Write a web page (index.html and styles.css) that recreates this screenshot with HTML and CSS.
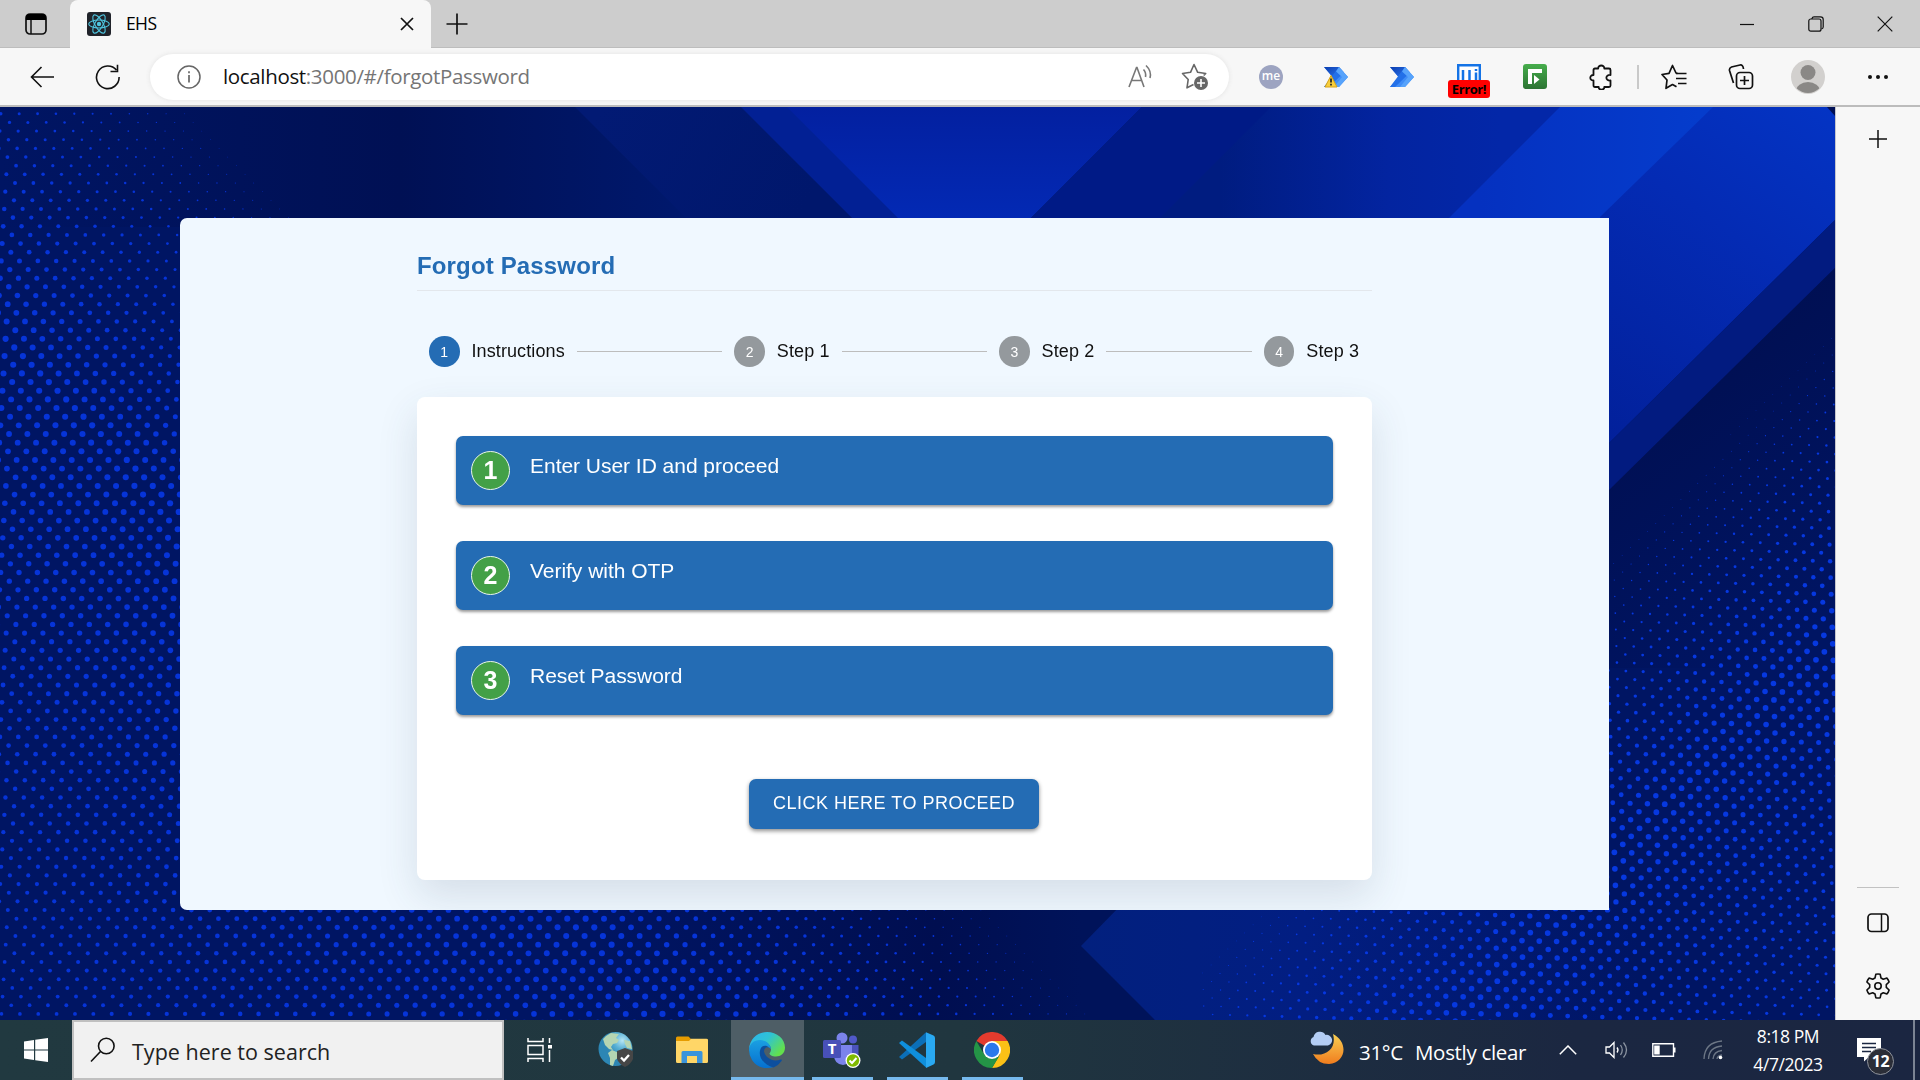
FILE: index.html
```html
<!DOCTYPE html>
<html lang="en">
<head>
<meta charset="utf-8">
<title>EHS</title>
<link rel="stylesheet" href="styles.css">
</head>
<body>
<div class="screen">
  <header class="tabstrip">
    <svg class="tab-actions" width="24" height="24" viewBox="0 0 24 24"><rect x="2" y="2" width="20" height="20" rx="4" fill="none" stroke="#111" stroke-width="1.7"/><path d="M2 8V5.500a3.500 3.500 0 0 1 3.500-3.500h13a3.500 3.500 0 0 1 3.500 3.500V8z" fill="#000"/><path d="M7 8v14" stroke="#111" stroke-width="1.500"/></svg>
    <div class="tab">
      <svg width="24" height="24" viewBox="0 0 24 24"><rect width="24" height="24" rx="3" fill="#20232a"/><g fill="none" stroke="#4fc6e0" stroke-width="1.100"><ellipse cx="12" cy="12" rx="10.300" ry="4"/><ellipse cx="12" cy="12" rx="10.300" ry="4" transform="rotate(60 12 12)"/><ellipse cx="12" cy="12" rx="10.300" ry="4" transform="rotate(120 12 12)"/></g><circle cx="12" cy="12" r="2.200" fill="#4fc6e0"/></svg>
      <span class="tab-title">EHS</span>
      <svg class="tab-close" width="14" height="14" viewBox="0 0 14 14"><path d="M1 1l12 12M13 1L1 13" stroke="#111" stroke-width="1.700"/></svg>
    </div>
    <svg class="new-tab" width="22" height="22" viewBox="0 0 22 22"><path d="M11 .5v21M.5 11h21" stroke="#111" stroke-width="1.700"/></svg>
    <div class="window-buttons">
      <svg width="16" height="16" viewBox="0 0 16 16"><path d="M1 8.500h14" stroke="#111" stroke-width="1.200"/></svg>
      <svg width="16" height="16" viewBox="0 0 16 16"><path d="M4 3V2.500Q4.500.8 6 .8h6.500Q15.200.8 15.200 3.500V11q0 1.500-1.700 2" fill="none" stroke="#111" stroke-width="1.200"/><rect x=".8" y="3" width="12.200" height="12.200" rx="2" fill="none" stroke="#111" stroke-width="1.200"/></svg>
      <svg width="16" height="16" viewBox="0 0 16 16"><path d="M.7.7l14.600 14.600M15.300.7L.7 15.300" stroke="#111" stroke-width="1.200"/></svg>
    </div>
  </header>

  <nav class="toolbar">
    <svg class="back" width="24" height="22" viewBox="0 0 24 22"><path d="M24 11H1.500M11.500 1L1.500 11l10 10" fill="none" stroke="#111" stroke-width="1.600"/></svg>
    <svg class="reload" width="26" height="26" viewBox="0 0 26 26"><path d="M24 11.500A11.300 11.300 0 1 1 20.500 5" fill="none" stroke="#111" stroke-width="1.600" transform="rotate(8 13 13)"/><path d="M22.500.8V7.500H15.500" fill="none" stroke="#111" stroke-width="1.600"/></svg>
    <div class="address">
      <svg width="24" height="24" viewBox="0 0 24 24"><circle cx="12" cy="12" r="11" fill="none" stroke="#666" stroke-width="1.500"/><path d="M12 10v7.500M12 6.200v2" stroke="#666" stroke-width="1.700"/></svg>
      <span class="url"><b>localhost</b>:3000/#/forgotPassword</span>
      <svg class="read" width="26" height="26" viewBox="0 0 26 26"><path d="M2 23L9.500 3.500h.5L17 23M4.700 16.500h9.800M16.500 5.500q2.800 3 2 7.500M19 1.500q5.800 5.500 4 12.500" fill="none" stroke="#777" stroke-width="1.600"/></svg>
      <svg width="28" height="28" viewBox="0 0 28 28"><path d="M12.500 23L6 26.300l1.200-8.300L1.500 12l8-1.200L13 3l3.700 7.800 8 1.200-2 2" transform="translate(0 -1.500)" fill="none" stroke="#666" stroke-width="1.600" stroke-linejoin="round"/><circle cx="20" cy="20" r="7" fill="#666"/><path d="M20 16v8M16 20h8" stroke="#fff" stroke-width="1.600"/></svg>
    </div>
    <svg width="24" height="24" viewBox="0 0 24 24"><circle cx="12" cy="12" r="12" fill="#9da4c1"/><text x="12" y="15" text-anchor="middle" class="me">me</text></svg>
    <svg width="24" height="24" viewBox="0 0 24 24"><use href="#flow"/><path d="M7 10.500L13 22H1z" fill="#f8cf3c" stroke="#d9a417" stroke-linejoin="round"/><path d="M7 13.500v4M7 18.700v1.800" stroke="#222" stroke-width="1.700"/></svg>
    <svg width="24" height="24" viewBox="0 0 24 24"><defs><linearGradient id="fd" x1="0" y1="0" x2="1" y2="1"><stop offset="0" stop-color="#0a3cae"/><stop offset="1" stop-color="#2a72ea"/></linearGradient><g id="flow"><path d="M0 2h15l9 10-9 10H0l8.500-10z" fill="#3f8df7"/><path d="M0 2h15l-6.500 10H8.500z" fill="url(#fd)"/><path d="M15 2L0 22h5L20 7.500z" fill="#2370e8"/><path d="M15 2l9 10-9 10H10l8-10-6-5.500z" fill="#57a3fb"/></g></defs><use href="#flow"/></svg>
    <div class="error-ext">
      <svg width="24" height="16" viewBox="0 0 24 16"><path d="M1.200 16V1.200h21.600V16" fill="#fff" stroke="#1473e6" stroke-width="2.400"/><path d="M6 6v10M12.500 6v10M19 8.500V16M19 5v2" stroke="#1473e6" stroke-width="2.500"/></svg>
      <span class="error-badge">Error!</span>
    </div>
    <svg class="green" width="24" height="25" viewBox="0 0 24 25"><defs><linearGradient id="gr" x2="0" y2="1"><stop offset="0" stop-color="#46ad4c"/><stop offset="1" stop-color="#2c7433"/></linearGradient></defs><rect width="24" height="25" rx="3" fill="url(#gr)"/><path d="M5 5h14v4H9v11H5z" fill="#fff"/><path d="M11 11l5.500 4.500L11 20z" fill="#fff"/></svg>
    <svg width="24" height="26" viewBox="0 0 24 26"><path d="M6 4.500h3.200C9 .5 15.500.5 15.300 4.500H20q1.500 0 1.500 1.500v5c-5.500-.5-5.500 6 0 5.500v5q0 1.500-1.500 1.500h-4.700c.2 3.500-5.800 3.500-5.600 0H6q-1.500 0-1.500-1.500v-5C.2 16.700.2 10.800 4.500 11V6q0-1.500 1.500-1.500z" fill="none" stroke="#111" stroke-width="1.800" stroke-linejoin="round"/></svg>
    <i class="separator"></i>
    <svg width="26" height="26" viewBox="0 0 26 26"><path d="M15 9.500h10.500M15 14.500h10.500M17 19.500h8.500" stroke="#111" stroke-width="1.700"/><path d="M16.500 9.500L15 9l-3.500-7.500L8 9.300 1 10.500l5 5.500-1 8.300 6.500-3.800 4 2.300" fill="none" stroke="#111" stroke-width="1.700" stroke-linejoin="round"/></svg>
    <svg width="26" height="26" viewBox="0 0 26 26"><rect x="8.500" y="8.500" width="16" height="16" rx="3.500" fill="none" stroke="#111" stroke-width="1.700"/><path d="M16.500 12v9M12 16.500h9M5.500 19L1.500 6.500Q1 4 3.500 3L12 1q3-.5 3.500 4" fill="none" stroke="#111" stroke-width="1.700"/></svg>
    <svg width="34" height="34" viewBox="0 0 34 34"><defs><clipPath id="av"><circle cx="17" cy="17" r="16"/></clipPath></defs><circle cx="17" cy="17" r="17" fill="#d2d0ce"/><circle cx="17" cy="12.500" r="7.500" fill="#8a8886"/><ellipse cx="17" cy="31" rx="12" ry="9" fill="#8a8886" clip-path="url(#av)"/></svg>
    <svg width="20" height="6" viewBox="0 0 20 6"><g fill="#111"><circle cx="2" cy="3" r="2"/><circle cx="10" cy="3" r="2"/><circle cx="18" cy="3" r="2"/></g></svg>
  </nav>

  <div class="middle">
    <main class="page">
      <svg class="art" width="1835" height="913" viewBox="0 107 1835 913">
        <defs>
          <linearGradient id="g1" gradientUnits="userSpaceOnUse" x1="400" y1="0" x2="740" y2="0"><stop offset="0" stop-color="#001054"/><stop offset="1" stop-color="#001a72"/></linearGradient>
          <linearGradient id="g2" gradientUnits="userSpaceOnUse" x1="600" y1="107" x2="800" y2="217"><stop offset="0" stop-color="#021a74"/><stop offset="1" stop-color="#00176c"/></linearGradient>
          <linearGradient id="g3" gradientUnits="userSpaceOnUse" x1="0" y1="107" x2="0" y2="217"><stop offset="0" stop-color="#0320a0"/><stop offset="1" stop-color="#0329b4"/></linearGradient>
          <linearGradient id="g4" gradientUnits="userSpaceOnUse" x1="1220" y1="0" x2="1500" y2="0"><stop offset="0" stop-color="#001c80"/><stop offset=".6" stop-color="#0324a0"/><stop offset="1" stop-color="#0327a8"/></linearGradient>
          <linearGradient id="g5" gradientUnits="userSpaceOnUse" x1="1480" y1="0" x2="1700" y2="0"><stop offset="0" stop-color="#0531c0"/><stop offset="1" stop-color="#053ccc"/></linearGradient>
          <linearGradient id="g6" gradientUnits="userSpaceOnUse" x1="1835" y1="107" x2="1600" y2="440"><stop offset="0" stop-color="#0434c4"/><stop offset=".4" stop-color="#042bb4"/><stop offset="1" stop-color="#02209a"/></linearGradient>
          <linearGradient id="g7" gradientUnits="userSpaceOnUse" x1="1081" y1="0" x2="1640" y2="0"><stop offset="0" stop-color="#02207e"/><stop offset=".4" stop-color="#021e82"/><stop offset="1" stop-color="#001563"/></linearGradient>
          <linearGradient id="g8" gradientUnits="userSpaceOnUse" x1="1620" y1="400" x2="1800" y2="640"><stop offset="0" stop-color="#000f52"/><stop offset="1" stop-color="#001563"/></linearGradient>
          <linearGradient id="g9" gradientUnits="userSpaceOnUse" x1="600" y1="0" x2="1081" y2="0"><stop offset="0" stop-color="#001563"/><stop offset=".7" stop-color="#000e50"/><stop offset="1" stop-color="#00135a"/></linearGradient>
          <linearGradient id="g0" gradientUnits="userSpaceOnUse" x1="0" y1="0" x2="400" y2="0"><stop offset="0" stop-color="#001563"/><stop offset="1" stop-color="#001054"/></linearGradient>
        </defs>
        <path d="M0 107h1835v913H0z" fill="#001563"/>
        <path d="M0 107h401v120H0z" fill="url(#g0)"/>
        <path d="M400 107h400v120H400z" fill="url(#g1)"/>
        <path d="M575 107h166l120 120H695z" fill="url(#g2)"/>
        <path d="M741 107h60l120 120h-60z" fill="#022094"/>
        <path d="M787 107h355l-120 120H907z" fill="url(#g3)"/>
        <path d="M1142 107h140v120h-260z" fill="#001a86"/>
        <path d="M1271 107h300v120h-420z" fill="url(#g4)"/>
        <path d="M1560 107h170v120h-290z" fill="url(#g5)"/>
        <path d="M1713 107h122v113L1600 452V217z" fill="url(#g6)"/>
        <path d="M1835 220v48L1600 499v-47z" fill="#021b80"/>
        <path d="M1835 268v400h-235V499z" fill="url(#g8)"/>
        <path d="M1827 107h8v9z" fill="#001055"/>
        <path d="M600 900h554v120H600z" fill="url(#g9)"/>
        <path d="M1126 900h709v120h-680l-74-74z" fill="url(#g7)"/>
      </svg>
      <canvas class="art" id="dots" width="1835" height="913"></canvas>
      <section class="card">
        <div class="card-body">
          <h1>Forgot Password</h1>
          <ol class="stepper">
            <li class="active"><i>1</i>Instructions</li>
            <li class="line"></li>
            <li><i>2</i>Step 1</li>
            <li class="line"></li>
            <li><i>3</i>Step 2</li>
            <li class="line"></li>
            <li><i>4</i>Step 3</li>
          </ol>
          <div class="panel">
            <div class="row"><i>1</i><span>Enter User ID and proceed</span></div>
            <div class="row"><i>2</i><span>Verify with OTP</span></div>
            <div class="row"><i>3</i><span>Reset Password</span></div>
            <button class="proceed">CLICK HERE TO PROCEED</button>
          </div>
        </div>
      </section>
    </main>
    <aside class="sidebar">
      <svg width="18" height="18" viewBox="0 0 18 18"><path d="M9 0v18M0 9h18" stroke="#111" stroke-width="1.500"/></svg>
      <i class="rule"></i>
      <svg class="panel-icon" width="22" height="20" viewBox="0 0 22 20"><rect x="1" y="1" width="20" height="17.500" rx="3.500" fill="none" stroke="#111" stroke-width="1.700"/><path d="M14.500 1v17.500" stroke="#111" stroke-width="1.500"/></svg>
      <svg width="26" height="26" viewBox="0 0 26 26"><path d="M10.800 1.300Q13 .7 15.200 1.300L16 5l2.300 1.300 3.600-1.200q1.600 1.700 2.200 3.900L21.300 11.600v2.800L24.100 17q-.6 2.200-2.200 3.900l-3.600-1.200L16 21l-.8 3.700q-2.200.6-4.400 0L10 21l-2.300-1.300-3.600 1.200Q2.500 19.200 1.900 17l2.800-2.600v-2.800L1.900 9q.6-2.200 2.200-3.900l3.600 1.200L10 5z" fill="none" stroke="#111" stroke-width="1.600" stroke-linejoin="round"/><circle cx="13" cy="13" r="3.200" fill="none" stroke="#111" stroke-width="1.600"/></svg>
    </aside>
  </div>

  <footer class="taskbar">
    <div class="start"><svg width="24" height="24" viewBox="0 0 24 24"><path d="M0 3.500L10 2v9.500H0zM11.200 1.800L24 0v11.500H11.200zM0 12.500h10V22L0 20.600zM11.200 12.500H24V24l-12.800-1.800z" fill="#fff"/></svg></div>
    <div class="search">
      <svg width="26" height="26" viewBox="0 0 26 26"><circle cx="16.300" cy="9" r="7.800" fill="none" stroke="#111" stroke-width="1.600"/><path d="M10.500 14.500L1 24.500" stroke="#111" stroke-width="1.600"/></svg>
      <span>Type here to search</span>
    </div>
    <div class="app plain view"><svg width="26" height="24" viewBox="0 0 26 24"><path d="M1 0v3.500h15V0M1 24v-3.500h15V24M1 7.500h15v9H1zM22.500 0v5M22.500 12v12" fill="none" stroke="#fff" stroke-width="1.500"/><path d="M21 7h4v3.500h-4z" fill="#fff"/></svg></div>
    <div class="app plain globe"><svg width="36" height="36" viewBox="0 0 36 36"><defs><radialGradient id="gl" cx=".7" cy=".25"><stop offset="0" stop-color="#b8e6f5"/><stop offset=".5" stop-color="#58b0d4"/><stop offset="1" stop-color="#2c86b4"/></radialGradient></defs><circle cx="17.500" cy="17" r="17" fill="url(#gl)"/><path d="M8 4l5-3 8 1-3 4 3 2-2 3-4 1-2 3 2 3-4-1-4-4-2-6zM14 18l7 3-1 5-3 2-2 6-3-1v-7l-2-5zM26 8l6 1 2 8-5-1-2-4z" fill="#b5d5b2"/><path d="M27 16l8 3v8q-2 5-8 8-6-3-8-8v-8z" fill="#464646"/><path d="M23 25.500l3 3 5-5.500" fill="none" stroke="#fff" stroke-width="2.300"/></svg></div>
    <div class="app plain folder"><svg width="32" height="28" viewBox="0 0 32 28"><path d="M0 2q0-1.500 1.500-1.500h11L15 3l-1 3H0z" fill="#e69c00"/><path d="M0 5h13l2-2.300h15.500Q32 2.700 32 4v21.500q0 1.500-1.500 1.500h-29Q0 27 0 25.500z" fill="#ffd667"/><path d="M5.500 27V16.500Q5.500 15 7 15h18q1.500 0 1.500 1.500V27h-5.500v-7H11v7z" fill="#3a94dc"/></svg></div>
    <div class="app current"><svg width="36" height="36" viewBox="0 0 36 36"><defs><linearGradient id="e1" x1="0" y1="0" x2="1" y2=".6"><stop offset="0" stop-color="#2bb3f0"/><stop offset=".5" stop-color="#2fc3d4"/><stop offset="1" stop-color="#63e04c"/></linearGradient><linearGradient id="e2" x2="0" y2="1"><stop offset="0" stop-color="#1ba0e2"/><stop offset="1" stop-color="#0670cf"/></linearGradient></defs><path d="M0 17C1 6 9 0 18 0c10 0 18 7 18 15.500 0 6-4.500 9-9 9-4 0-6.500-1.500-6.500-3 0-.8 1.500-1.500 1.500-4C22 11 14 8 9 9.500 4 11 1 14 0 17z" fill="url(#e1)"/><path d="M0 18C0 12 5 8 11 8c6 0 11 4 11 9.500-1-2.500-4-3.500-6.500-1.500-7 5-1 16 9 19Q10 39 3 28 0 23 0 18z" fill="url(#e2)"/><path d="M11.500 17c-3 8 3.500 16 13 18.500q5-2 8-6.500 1-2-1-1.500c-8 3-15-2-16.500-8 0-3 2-5 5-4-3-3-7-2-8.500 1.500z" fill="#0d4f9e"/></svg></div>
    <div class="app"><svg width="38" height="36" viewBox="0 0 38 36"><circle cx="19" cy="6" r="5.500" fill="#7b83eb"/><circle cx="30" cy="7.500" r="4" fill="#5059c9"/><path d="M20 13h15.500v9q-1 7-8 8z" fill="#4b53bc"/><path d="M11 13h18v10q0 9-9 10-9-1-9-10z" fill="#7b83eb"/><rect x="0" y="8" width="18" height="18" rx="1.500" fill="#4850b8"/><text x="9" y="21.500" text-anchor="middle" class="teams">T</text><circle cx="30" cy="28.500" r="7.500" fill="#fff"/><circle cx="30" cy="28.500" r="6.200" fill="#7fba00"/><path d="M26.500 28.500l2.500 2.500 4.500-5" fill="none" stroke="#fff" stroke-width="2"/></svg></div>
    <div class="app"><svg width="36" height="36" viewBox="0 0 36 36"><path d="M0 25l3 2.500L27 10V.3z" fill="#0b6fb8"/><path d="M0 11l3-2.500L27 26v9.500z" fill="#0f8fdc"/><path d="M27 .2L34.500 3.500Q36 4.200 36 6v24q0 1.800-1.500 2.500L27 36z" fill="#29a9f2"/></svg></div>
    <div class="app"><svg width="36" height="36" viewBox="0 0 36 36"><path d="M18 18L2.400 9A18 18 0 0 1 33.600 9z" fill="#e33b2e"/><path d="M18 9h15.600A18 18 0 0 1 18 36l7.800-13.500z" fill="#fbc116"/><path d="M2.400 9l7.800 13.500L18 27l7 -2.500L18 36A18 18 0 0 1 2.400 9z" fill="#249446"/><circle cx="18" cy="18" r="9" fill="#fff"/><circle cx="18" cy="18" r="7.200" fill="#2b78ec"/></svg></div>
    <div class="tray">
      <svg class="moon" width="36" height="36" viewBox="0 0 36 36"><defs><linearGradient id="mo" x2="0" y2="1"><stop offset="0" stop-color="#f8d053"/><stop offset="1" stop-color="#f07c1e"/></linearGradient></defs><path d="M24 4C40 12 37 33 20 34Q9 34 4 24C17 27 28 18 24 4z" fill="url(#mo)"/><path d="M5 15.500a4.500 4.500 0 0 1-.5-8.500 6.500 6.500 0 0 1 12-2 5.200 5.200 0 0 1 2.500 10.500z" fill="#b3cdf5"/></svg>
      <span class="weather">31°C</span><span class="weather sky">Mostly clear</span>
      <svg class="chev" width="18" height="10" viewBox="0 0 18 10"><path d="M.8 9.200L9 1l8.200 8.200" fill="none" stroke="#fff" stroke-width="1.500"/></svg>
      <svg class="spk" width="24" height="18" viewBox="0 0 24 18"><path d="M1 6v6h3.500L9 16.500v-15L4.500 6z" fill="none" stroke="#fff" stroke-width="1.300"/><path d="M12 6.500q2 2.500 0 5" fill="none" stroke="#fff" stroke-width="1.300"/><path d="M15.500 4q3.500 5 0 10M18.500 1.500q6 7.500 0 15" fill="none" stroke="#8a93a0" stroke-width="1.300"/></svg>
      <svg class="bat" width="24" height="14" viewBox="0 0 24 14"><path d="M.8.800h20.700v12.400H.8zM22.800 4.500v5" fill="none" stroke="#fff" stroke-width="1.400"/><path d="M2.200 2.500h5.500v9H2.200z" fill="#fff"/></svg>
      <svg class="wifi" width="20" height="20" viewBox="0 0 20 20"><path d="M1 19Q1.500 2.500 19 1M5.500 19Q6 7 19 6M10 19q.5-7.500 9-8.500M14 19q.5-3.500 5-4" fill="none" stroke="#6d7786" stroke-width="1.300"/><circle cx="17.500" cy="17.500" r="1.800" fill="#fff"/></svg>
      <div class="clock"><span>8:18 PM</span><span>4/7/2023</span></div>
      <div class="notes"><svg width="24" height="24" viewBox="0 0 24 24"><path d="M0 0h24v19H12l-5 4.500V19H0z" fill="#fff"/><path d="M5 5.500h14M5 9.500h14M5 13.500h9" stroke="#1b2741" stroke-width="1.400"/></svg><b>12</b></div>
    </div>
  </footer>
</div>
<script src="dots.js"></script>
</body>
</html>
```
FILE: styles.css
```css
* { box-sizing: border-box; }
body { margin: 0; font-family: "Open Sans", "Noto Sans", sans-serif; }
svg { display: block; flex: none; }
i, b { font-style: normal; font-weight: inherit; }
.screen { width: 1920px; height: 1080px; overflow: hidden; display: flex; flex-direction: column; }

.tabstrip { height: 48px; background: #cdcdcd; display: flex; align-items: center; box-shadow: inset 0 -1px #bdbdbd; }
.tab-actions { margin-left: 24px; }
.tab { width: 361px; height: 48px; margin-left: 22px; padding: 0 17px 0 17px; border-radius: 8px 8px 0 0; background: #f7f7f7; display: flex; align-items: center; }
.tab-title { margin: -2px 0 0 15px; font-size: 17.5px; letter-spacing: -.6px; }
.tab-close { margin-left: auto; }
.new-tab { margin-left: 15px; }
.window-buttons { margin-left: auto; margin-right: 27px; display: flex; gap: 53px; }

.toolbar { height: 59px; background: #f7f7f7; border-bottom: 2px solid #bcbcbc; display: grid; align-items: center; justify-items: center;
  grid-template-columns: 84px 66px 1079px 84px 46px 86px 48px 74px 68px 6px 66px 68px 66px 74px; }
.reload { margin-right: 18px; }
.green { margin-left: 10px; }
.address { width: 1079px; height: 46px; border-radius: 23px; background: #fff; box-shadow: 0 0 5px #e2e2e2; padding: 0 20px 0 27px; display: flex; align-items: center; }
.url { margin: -2px 0 0 22px; font-size: 20.5px; letter-spacing: -.34px; color: #757575; }
.url b { color: #111; }
.read { margin-left: auto; margin-right: 28px; }
.me { font: 600 12px "Open Sans", sans-serif; fill: #fff; }
.teams { font: 700 15px "Open Sans", sans-serif; fill: #fff; }
.error-ext { width: 42px; height: 34px; margin-top: 9px; display: flex; flex-direction: column; align-items: center; }
.error-badge { width: 42px; height: 18px; border-radius: 3px; background: #f00; font-weight: 700; font-size: 13px; line-height: 18px; text-align: center; letter-spacing: -.4px; }
.separator { width: 2px; height: 24px; background: #c9c9c9; }

.middle { flex: 1; display: flex; }
.page { width: 1835px; height: 913px; display: grid; overflow: hidden; }
.art, .card { grid-area: 1 / 1; }
.card { width: 1429px; height: 692px; margin: 111px 0 0 180px; background: #f0f8ff; border-radius: 7px 0 0 7px; z-index: 1; display: flex; justify-content: center; font-family: "Liberation Sans", Arial, sans-serif; overflow: hidden; }
.card-body { width: 955px; }
h1 { height: 73px; margin: 0; padding-top: 34px; border-bottom: 1px solid #e3e7ec; color: #246cb4; font-size: 24px; line-height: 28px; letter-spacing: .15px; }
.stepper { list-style: none; margin: 0; padding: 15px 13px 0 12px; height: 106px; display: flex; align-items: center; gap: 12px; font-size: 18px; color: #111; }
.stepper li { display: flex; align-items: center; gap: 12px; white-space: nowrap; letter-spacing: .1px; }
.stepper i { width: 30.500px; height: 30.500px; border-radius: 50%; background: #94999d; color: #fff; font-size: 14px; display: grid; place-items: center; }
.stepper .active i { background: #246cb4; }
.stepper .line { flex: 1; height: 1px; background: #bdbdbd; }
.panel { height: 483px; padding: 39px; border-radius: 8px; background: #fff; box-shadow: 0 16px 40px rgba(50, 70, 90, .14); display: flex; flex-direction: column; }
.row { height: 69px; margin-bottom: 36px; padding: 15px; border-radius: 7px; background: #246cb4; box-shadow: 0 2px 3px rgba(0, 0, 0, .4); display: flex; color: #fff; font-size: 21px; }
.row i { width: 39px; height: 39px; border: 1.500px solid #e8f5e9; border-radius: 50%; background: #43a047; font-weight: 700; font-size: 25px; display: grid; place-items: center; }
.row span { margin-left: 20px; line-height: 30px; letter-spacing: -.03px; }
.proceed { width: 290px; height: 50px; margin: 28px 294px 0 293px; padding: 0 0 2px; border: 0; border-radius: 7px; background: #246cb4; box-shadow: 0 2px 4px rgba(0, 0, 0, .45); color: #fff; font: 18px "Liberation Sans", Arial, sans-serif; letter-spacing: .5px; white-space: nowrap; }

.sidebar { flex: 1; border-left: 1px solid #c6c6cc; background: #f7f7f7; display: flex; flex-direction: column; align-items: center; padding: 23px 0 21px; }
.rule { width: 42px; height: 1.500px; margin-top: auto; background: #c2c2c2; }
.panel-icon { margin: 25px 0 40px; }

.taskbar { height: 60px; background: linear-gradient(90deg, #213940, #20363f 50%, #1b2741 82%, #1b2641); display: flex; color: #fff; }
.start { width: 72px; display: flex; align-items: center; justify-content: center; }
.search { width: 432px; border: 2px solid #c0c0c0; background: #f1f1f1; color: #222; display: flex; align-items: center; padding-left: 16px; font-size: 21.500px; letter-spacing: .02px; }
.search span { margin: 2px 0 0 16px; white-space: nowrap; }
.app { width: 61px; margin-left: 14px; padding: 2px 2px 0 0; border-bottom: 3px solid #76b9ed; display: flex; align-items: center; justify-content: center; }
.app.plain { border-color: transparent; margin-left: 0; }
.app.current { width: 73px; margin-left: 0; padding-right: 2px; background: #4e5e66; }
.app.current + .app { margin-left: 8px; }
.app.view { width: 72px; padding-right: 0; }
.app.globe { width: 80px; padding-right: 0; }
.app.folder { width: 75px; padding-right: 4px; }
.tray { margin-left: auto; width: 609px; display: flex; align-items: center; border-right: 2px solid #7b8494; margin-right: 5px; white-space: nowrap; }
.moon { margin: -4px 14px 0 3px; }
.weather { width: 56px; margin-top: 3px; font-size: 20.500px; letter-spacing: -.32px; }
.weather.sky { width: 144px; }
.spk { margin-left: 28px; }
.bat { margin-left: 23px; }
.wifi { margin-left: 27px; }
.clock { width: 76px; margin-left: 27px; display: flex; flex-direction: column; align-items: center; gap: 4px; font-size: 17.500px; line-height: 24px; letter-spacing: -.45px; }
.notes { display: flex; margin: 12px 0 0 31px; }
.notes b { width: 27px; height: 27px; margin: 10px 0 0 -14px; border: 1.500px solid #8e929b; border-radius: 50%; background: #2b2e38; z-index: 1; font-weight: 700; font-size: 16px; letter-spacing: -.5px; display: grid; place-items: center; }
```
FILE: dots.js
```js
// Halftone dots over the blue backdrop: two lattices whose dot size fades along the diagonals.
const ctx = document.getElementById('dots').getContext('2d');
ctx.translate(0, -107);

function lattice(origin, a, b, radius, inside, color) {
  ctx.fillStyle = color;
  for (let j = -140; j < 140; j++) {
    for (let i = -220; i < 220; i++) {
      const x = origin[0] + i * a[0] + j * b[0];
      const y = origin[1] + i * a[1] + j * b[1];
      if (x < -5 || x > 1840 || y < 100 || y > 1025 || !inside(x, y)) continue;
      const r = radius(x, y);
      if (r < 0.3) continue;
      ctx.beginPath();
      ctx.arc(x, y, r, 0, Math.PI * 2);
      ctx.fill();
    }
  }
}

lattice([2, 702.3], [18.36, 0], [8.657, 8.655],
  (x, y) => { const u = y - x; return u < 330 ? 3.1 * (u + 130) / 460 : 3.1 - (u - 330) * 0.0019; },
  (x, y) => x < 1082 || (y > 946 && x - 1081 < y - 946), '#0634d8');

lattice([1613.3, 819.3], [17.33, 0.48], [8.93, 8.5],
  (x, y) => { const s = x + y; return s < 2470 ? 2.9 * (s - 2130) / 340 : 2.9 - (s - 2470) * 0.0042; },
  (x, y) => x > 1200 && x + y > 2130, '#0638e0');
```
